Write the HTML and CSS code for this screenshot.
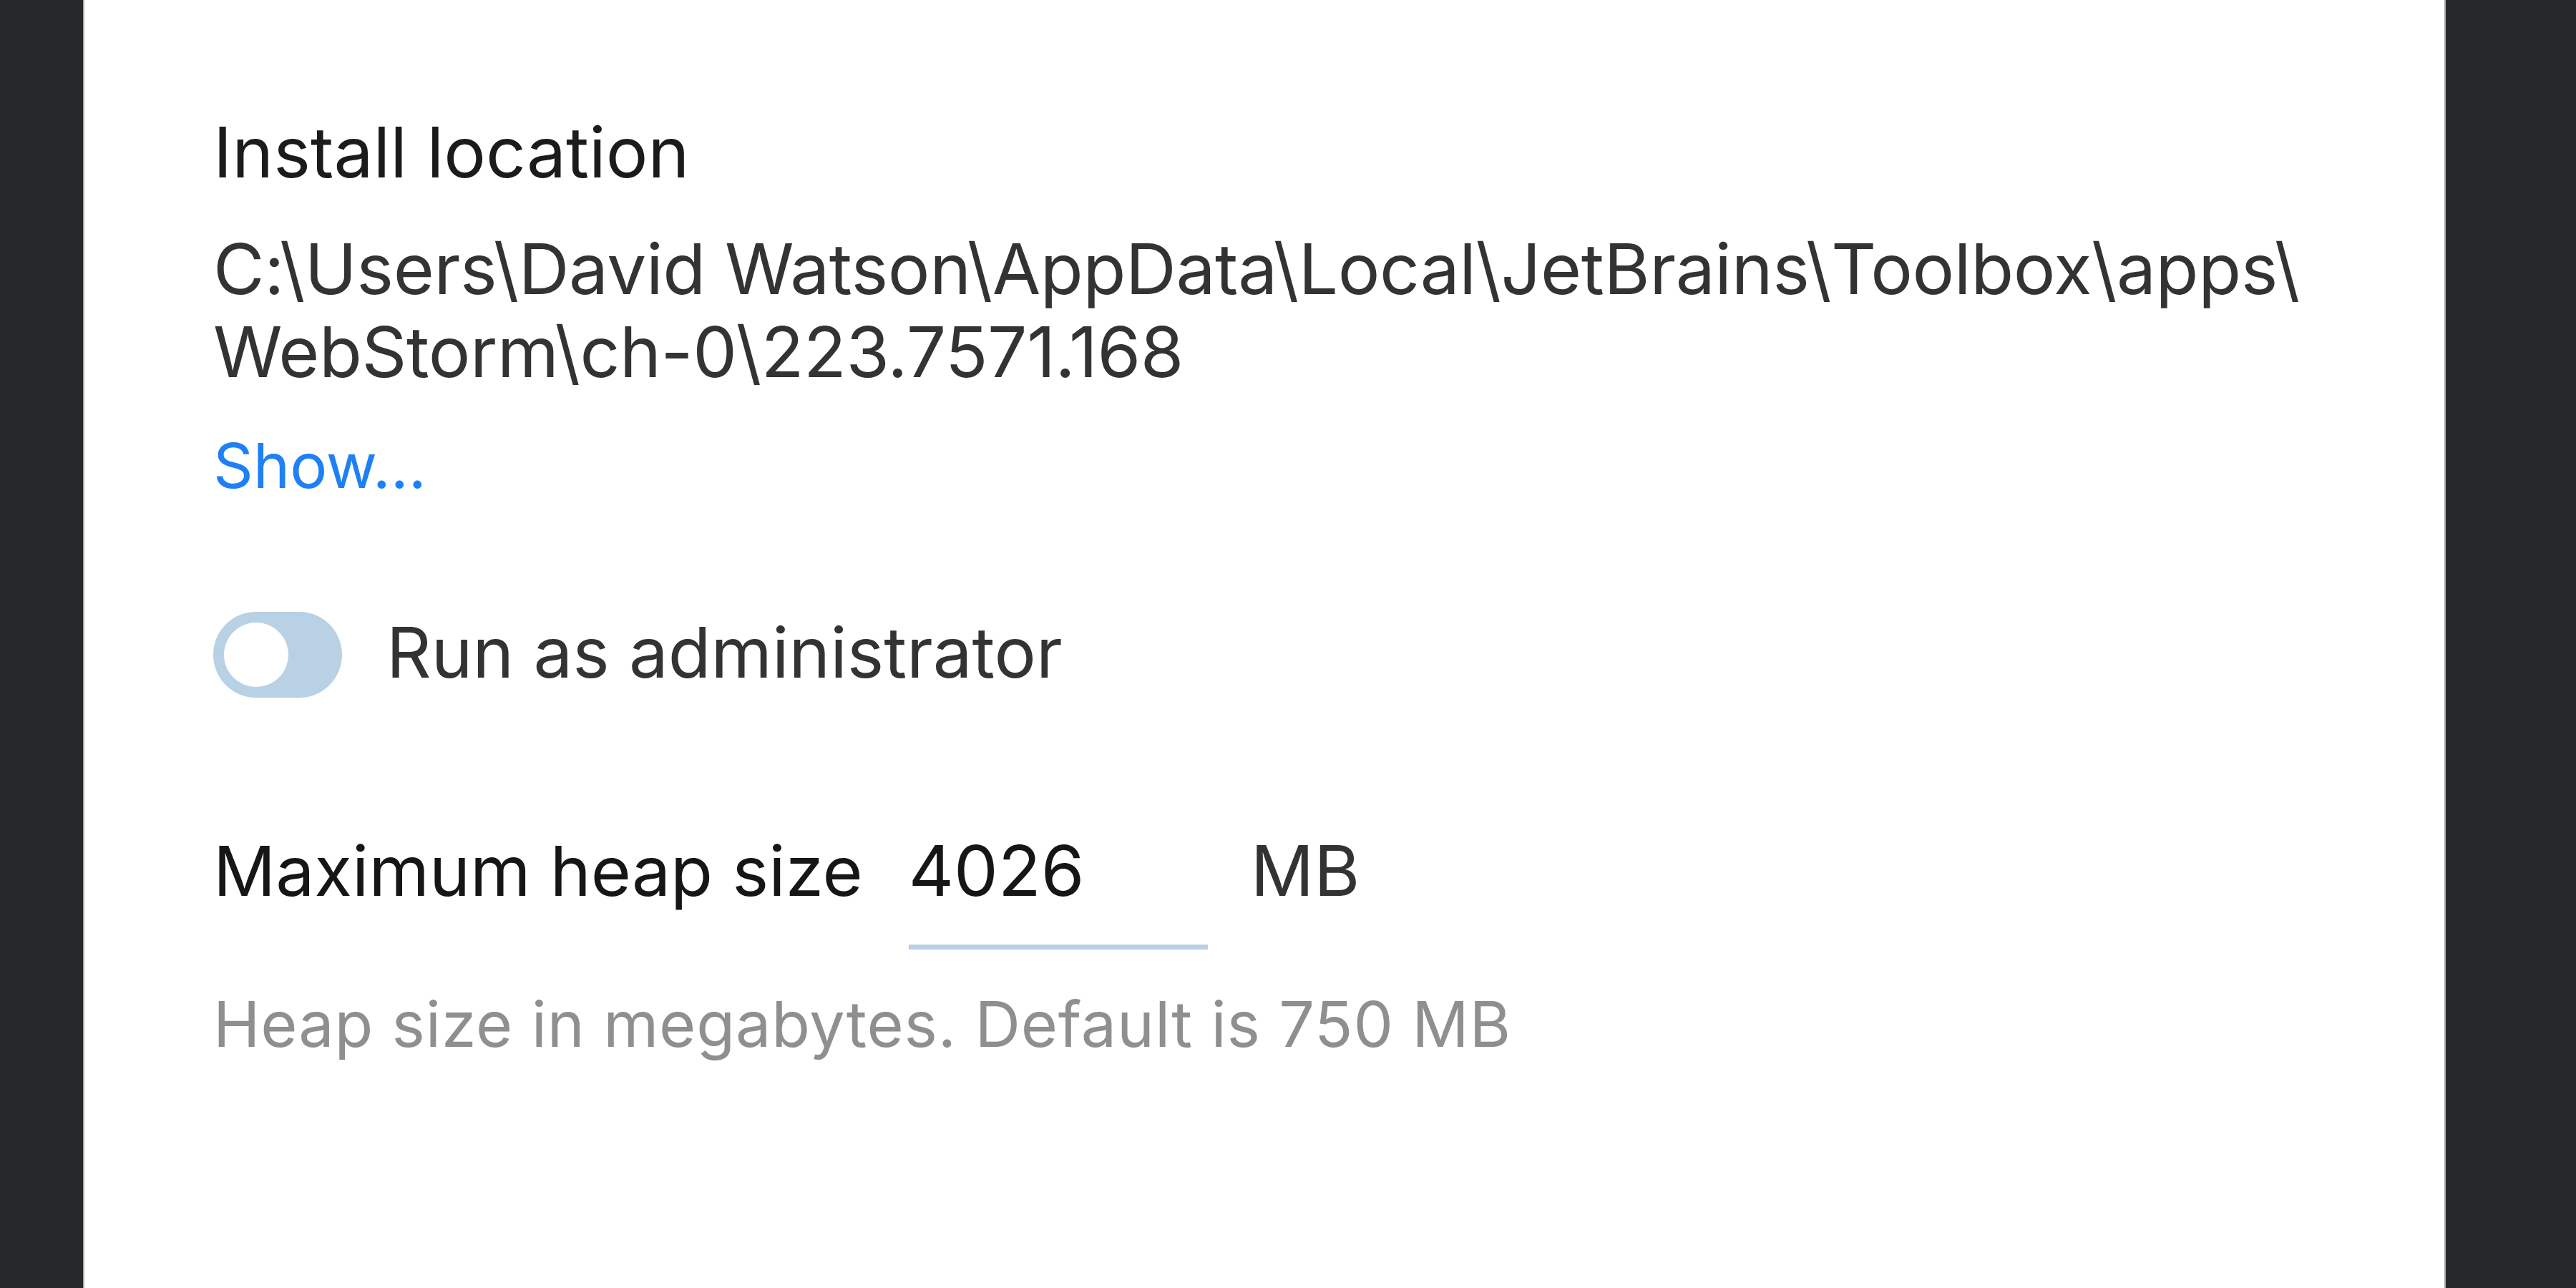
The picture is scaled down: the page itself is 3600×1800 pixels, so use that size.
FILE: index.html
```html
<!DOCTYPE html>
<html lang="en">
<head>
  <meta charset="UTF-8">
  <title>WebStorm Settings</title>
  <link rel="stylesheet" href="styles.css">
</head>
<body>
  <!-- Settings panel -->
  <div class="panel">
    <div class="field">
      <div class="field-label">Install location</div>
      <div class="path">C:\<wbr>Users\<wbr>David Watson\<wbr>AppData\<wbr>Local\<wbr>JetBrains\<wbr>Toolbox\<wbr>apps\<wbr>WebStorm\<wbr>ch-0\<wbr>223.7571.168</div>
      <a class="link" href="#">Show...</a>
    </div>

    <!-- Run as admin toggle -->
    <label class="switch-row">
      <input type="checkbox" class="switch-input">
      <span class="switch"></span>
      <span class="switch-label">Run as administrator</span>
    </label>

    <!-- Heap size -->
    <div class="heap-row">
      <span class="heap-label">Maximum heap size</span>
      <input class="heap-input" type="text" value="4026">
      <span class="heap-unit">MB</span>
    </div>
    <div class="hint">Heap size in megabytes. Default is 750 MB</div>
  </div>
</body>
</html>
```

FILE: styles.css
```css
body {
  margin: 0;
  padding: 0 0 0 116px;
  height: 1800px;
  overflow: hidden;
  background-color: #27282b;
  font-family: Inter, 'Liberation Sans', sans-serif;
  color: #333;
}

.panel {
  box-sizing: border-box;
  width: 3302px;
  height: 1800px;
  background-color: #fff;
  border-left: 2px solid #a9a9ab;
  border-right: 2px solid #a9a9ab;
  padding: 155px 100px 0 180px;
  font-size: 98px;
  line-height: 116px;
}

.field-label {
  color: #1b1b1b;
  margin-bottom: 47px;
}

.path {
  color: #333;
  letter-spacing: -0.4px;
}

.link {
  display: inline-block;
  margin-top: 51px;
  font-size: 87px;
  line-height: 100px;
  color: #1f80f5;
  text-decoration: none;
}

/* Toggle switch */
.switch-row {
  display: flex;
  align-items: center;
  gap: 62px;
  margin-top: 150px;
  height: 120px;
  cursor: pointer;
}

.switch-input {
  display: none;
}

.switch {
  position: relative;
  flex: 0 0 auto;
  width: 180px;
  height: 120px;
  border-radius: 60px;
  background-color: #b8d1e5;
}

.switch:before {
  position: absolute;
  content: "";
  left: 15px;
  top: 15px;
  width: 90px;
  height: 90px;
  border-radius: 50%;
  background-color: #fff;
}

.switch-label {
  color: #333;
  font-size: 97.5px;
  margin-top: -6px;
}

/* Heap size row */
.heap-row {
  display: flex;
  align-items: baseline;
  margin-top: 184px;
}

.heap-label {
  color: #161616;
  font-size: 96.5px;
  margin-right: 64px;
}

.heap-input {
  width: 418px;
  box-sizing: border-box;
  padding: 0 0 45px 0;
  border: none;
  border-bottom: 7px solid #b7d0e5;
  outline: none;
  font-family: inherit;
  font-size: 98px;
  line-height: 116px;
  color: #161616;
  background: transparent;
}

.heap-unit {
  color: #333;
  margin-left: 60px;
}

.hint {
  margin-top: 54px;
  font-size: 88px;
  letter-spacing: 0.8px;
  line-height: 100px;
  color: #8f8f8f;
}
```
